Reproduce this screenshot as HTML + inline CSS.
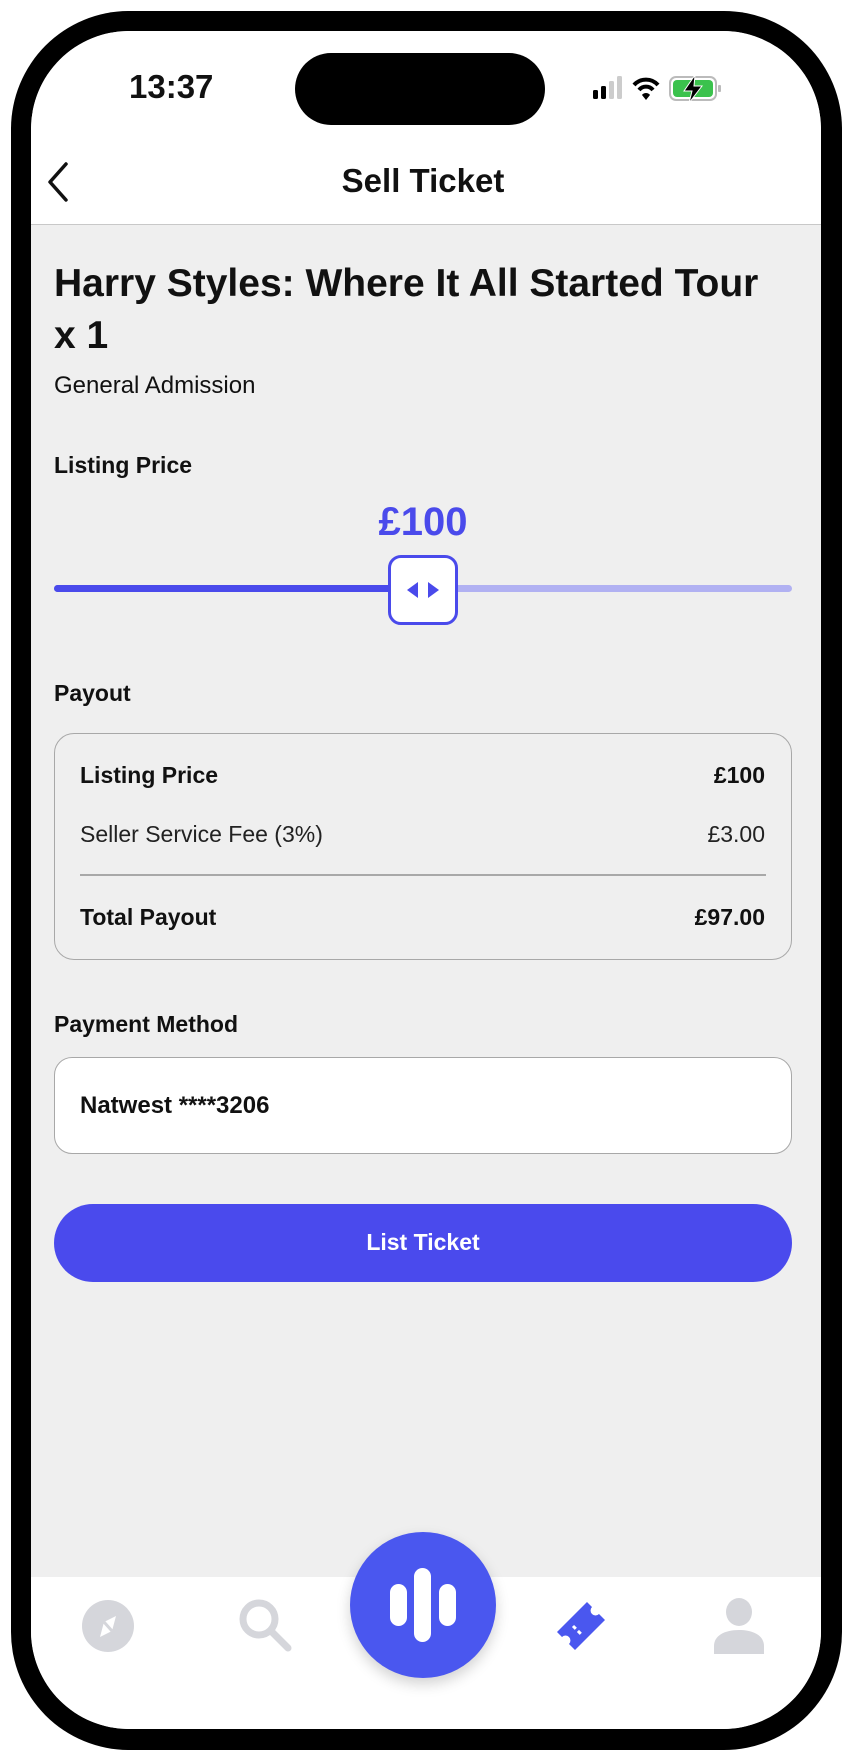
<!DOCTYPE html>
<html><head><meta charset="utf-8"><style>
*{margin:0;padding:0;box-sizing:border-box}
body{width:846px;height:1764px;background:#fff;position:relative;overflow:hidden;font-family:"Liberation Sans",sans-serif;color:#111}
.phone{position:absolute;left:11px;top:11px;width:831px;height:1739px;background:#000;border-radius:118px}
.screen{position:absolute;left:31px;top:31px;width:790px;height:1698px;background:#efefef;border-radius:98px;overflow:hidden}
.abs{position:absolute}
.t{position:absolute;white-space:nowrap}
</style></head><body>
<div class="phone"></div>
<div class="screen">
  <div class="abs" style="left:0;top:0;width:790px;height:194px;background:#fff;border-bottom:1.5px solid #c8c8c8"></div>
  <div class="abs" style="left:0;top:1546px;width:790px;height:152px;background:#fff"></div>
</div>
<!-- status -->
<div class="t" style="left:129px;top:68px;font-size:33px;font-weight:600">13:37</div>
<div class="abs" style="left:295px;top:53px;width:250px;height:72px;background:#000;border-radius:36px"></div>
<svg class="abs" style="left:592px;top:74px" width="162" height="30" viewBox="0 0 162 30">
 <rect x="1" y="16" width="5" height="9" rx="1.5" fill="#000"/>
 <rect x="9" y="12" width="5" height="13" rx="1.5" fill="#000"/>
 <rect x="17" y="7" width="5" height="18" rx="1.5" fill="#ccc"/>
 <rect x="25" y="2" width="5" height="23" rx="1.5" fill="#ccc"/>
 <path d="M42 11 a16 16 0 0 1 24 0" stroke="#000" stroke-width="4" fill="none"/>
 <path d="M47 16 a9 9 0 0 1 14 0" stroke="#000" stroke-width="4" fill="none"/>
 <path d="M50 21 l4 5 l4 -5 a5 5 0 0 0 -8 0z" fill="#000"/>
 <rect x="78" y="3" width="46" height="23" rx="6" fill="none" stroke="#bbb" stroke-width="2"/>
 <rect x="81" y="6" width="40" height="17" rx="4" fill="#3bc24d"/>
 <rect x="126" y="11" width="3" height="7" rx="1" fill="#bbb"/>
 <path d="M103 1 L92 17 H100 L97 29 L110 12 H102 Z" fill="#000" stroke="#fff" stroke-width="1"/>
</svg>
<!-- header -->
<svg class="abs" style="left:46px;top:162px" width="24" height="40" viewBox="0 0 24 40"><path d="M20 2 L4 20 L20 38" stroke="#111" stroke-width="3.5" fill="none" stroke-linecap="round" stroke-linejoin="round"/></svg>
<div class="t" style="left:0;width:846px;text-align:center;top:162px;font-size:33px;font-weight:600">Sell Ticket</div>
<!-- content -->
<div class="t" style="left:54px;top:262px;font-size:39px;font-weight:600">Harry Styles: Where It All Started Tour</div>
<div class="t" style="left:54px;top:314px;font-size:39px;font-weight:600">x 1</div>
<div class="t" style="left:54px;top:372px;font-size:24px">General Admission</div>
<div class="t" style="left:54px;top:452px;font-size:23px;font-weight:bold">Listing Price</div>
<div class="t" style="left:0;width:846px;text-align:center;top:500px;font-size:40px;font-weight:bold;color:#4a4aeb">£100</div>
<div class="abs" style="left:54px;top:585px;width:738px;height:7px;border-radius:4px;background:#b1b1f2"></div>
<div class="abs" style="left:54px;top:585px;width:340px;height:7px;border-radius:4px;background:#4a4aeb"></div>
<div class="abs" style="left:388px;top:555px;width:70px;height:70px;border-radius:13px;background:#fff;border:3.5px solid #4a4aeb"></div>
<svg class="abs" style="left:405px;top:578px" width="36" height="24" viewBox="0 0 36 24"><path d="M2 12 L13 4 V20Z M34 12 L23 4 V20Z" fill="#4a4aeb"/></svg>
<div class="t" style="left:54px;top:680px;font-size:23px;font-weight:bold">Payout</div>
<div class="abs" style="left:54px;top:733px;width:738px;height:227px;border:1.5px solid #a8a8a8;border-radius:20px"></div>
<div class="t" style="left:80px;top:762px;font-size:23px;font-weight:600">Listing Price</div>
<div class="t" style="right:81px;top:762px;font-size:23px;font-weight:600">£100</div>
<div class="t" style="left:80px;top:821px;font-size:23px;color:#222">Seller Service Fee (3%)</div>
<div class="t" style="right:81px;top:821px;font-size:23px;color:#222">£3.00</div>
<div class="abs" style="left:80px;top:874px;width:686px;height:1.5px;background:#a8a8a8"></div>
<div class="t" style="left:80px;top:904px;font-size:23px;font-weight:600">Total Payout</div>
<div class="t" style="right:81px;top:904px;font-size:23px;font-weight:bold">£97.00</div>
<div class="t" style="left:54px;top:1011px;font-size:23px;font-weight:bold">Payment Method</div>
<div class="abs" style="left:54px;top:1057px;width:738px;height:97px;background:#fff;border:1.5px solid #a8a8a8;border-radius:18px"></div>
<div class="t" style="left:80px;top:1092px;font-size:24px;font-weight:600">Natwest ****3206</div>
<div class="abs" style="left:54px;top:1204px;width:738px;height:78px;background:#4a4aed;border-radius:39px"></div>
<div class="t" style="left:0;width:846px;text-align:center;top:1229px;font-size:23px;font-weight:bold;color:#fff">List Ticket</div>
<!-- tab bar -->
<div class="abs" style="left:350px;top:1532px;width:146px;height:146px;border-radius:50%;background:#4a57ef;box-shadow:0 6px 14px rgba(0,0,0,.18)"></div>
<svg class="abs" style="left:350px;top:1532px" width="146" height="146" viewBox="0 0 146 146">
 <rect x="40" y="52" width="17" height="42" rx="8.5" fill="#fff"/>
 <rect x="64" y="36" width="17" height="74" rx="8.5" fill="#fff"/>
 <rect x="89" y="52" width="17" height="42" rx="8.5" fill="#fff"/>
</svg>
<svg class="abs" style="left:82px;top:1600px" width="52" height="52" viewBox="0 0 52 52"><circle cx="26" cy="26" r="26" fill="#d5d6db"/><path d="M34 16 L30 31 L18 37 L22 22Z" fill="#fff"/><path d="M30 31 L22 22" stroke="#d5d6db" stroke-width="3"/></svg>
<svg class="abs" style="left:238px;top:1598px" width="56" height="56" viewBox="0 0 56 56"><circle cx="21" cy="21" r="16" stroke="#d5d6db" stroke-width="7" fill="none"/><path d="M33 33 L50 50" stroke="#d5d6db" stroke-width="7" stroke-linecap="round"/></svg>
<svg class="abs" style="left:555px;top:1600px" width="52" height="52" viewBox="0 0 52 52"><path d="M32 2 L37 7 a4 4 0 0 0 7 7 L50 20 L20 50 L14 44 a4 4 0 0 0 -7 -7 L2 32Z" fill="#4a57ef"/><path d="M18 26 L26 34" stroke="#fff" stroke-width="3" stroke-dasharray="4 3"/></svg>
<svg class="abs" style="left:712px;top:1598px" width="54" height="56" viewBox="0 0 54 56"><ellipse cx="27" cy="14" rx="13" ry="14" fill="#d5d6db"/><path d="M2 56 V48 C2 38 12 32 27 32 C42 32 52 38 52 48 V56Z" fill="#d5d6db"/></svg>
</body></html>
